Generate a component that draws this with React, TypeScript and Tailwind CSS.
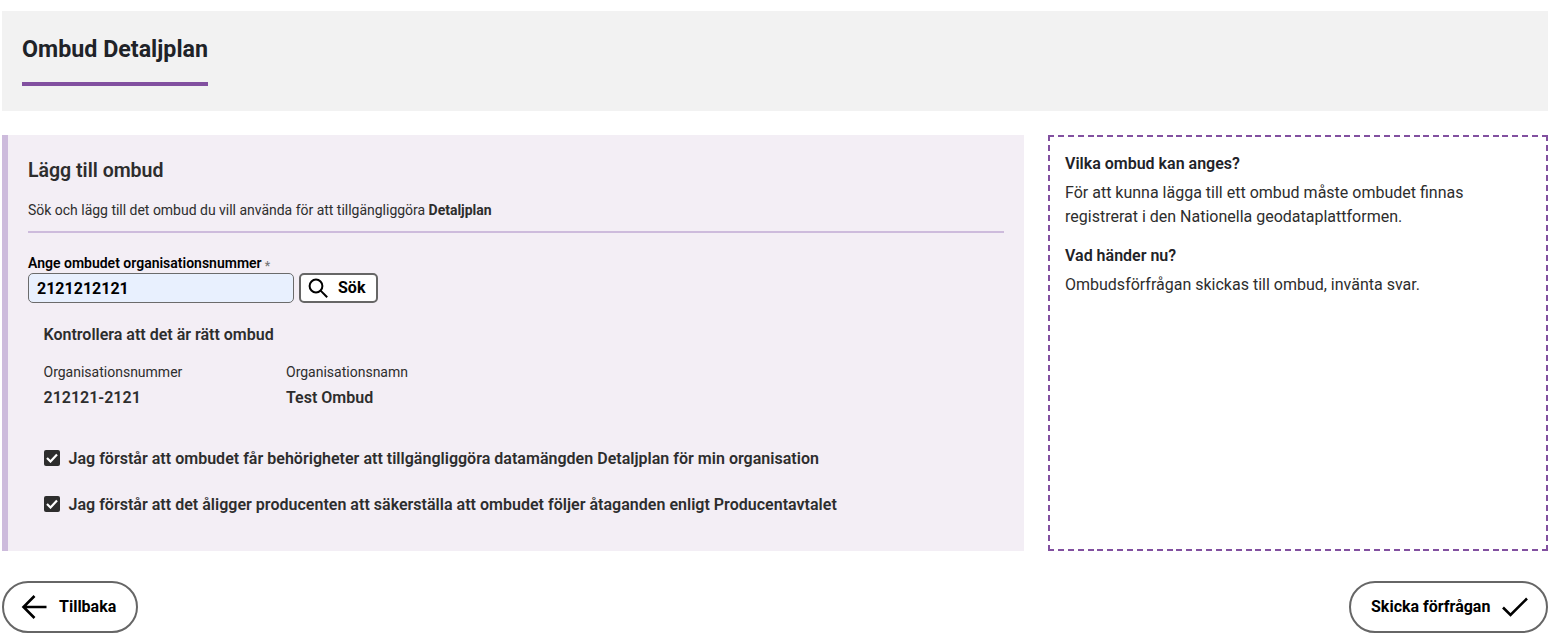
function CheckMark({ className }: { className?: string }) {
  return (
    <svg viewBox="0 0 26 20" width="26" height="20" fill="none" stroke="currentColor" strokeWidth="2.6" className={className}>
      <path d="M1 10.5 L8.5 18 L25 1.5" />
    </svg>
  );
}

function Consent({ children }: { children: string }) {
  return (
    <label className="flex items-center h-[22px] text-[16px] font-semibold tracking-[0.02px] text-[#2d2d2d]">
      <span className="w-4 h-4 mr-[9px] rounded-[2px] bg-[#2d2d2d] flex items-center justify-center shrink-0">
        <svg viewBox="0 0 12 10" width="12" height="10" fill="none" stroke="white" strokeWidth="2.2">
          <path d="M1 5 L4.5 8.5 L11 1.5" />
        </svg>
      </span>
      <span className="pt-[2px]">{children}</span>
    </label>
  );
}

export default function App() {
  return (
    <div className="w-[1546px] ml-[2px] pt-[11px] font-['Roboto',sans-serif] text-[#2d2d2d]">
      <header className="h-[100px] bg-[#f2f2f2] px-5 pt-[22px]">
        <div className="inline-block">
          <h1 className="text-[23.25px] leading-[32px] font-bold text-[#1f2328] pb-[17px] border-b-4 border-[#8250a0]">
            Ombud Detaljplan
          </h1>
        </div>
      </header>

      <main className="flex gap-6 mt-6 h-[416px]">
        <section className="w-[1022px] bg-[#f3eef5] border-l-[6px] border-[#cdbbdc] pl-5 pr-5 pt-[21px]">
          <h2 className="text-[19.5px] leading-[30px] font-semibold">Lägg till ombud</h2>
          <p className="mt-[14px] text-[14px] leading-[20px] tracking-[-0.015px] pb-[11px] border-b-2 border-[#cdbbdc]">
            Sök och lägg till det ombud du vill använda för att tillgängliggöra <strong className="font-bold">Detaljplan</strong>
          </p>
          <div className="mt-5 h-5 text-[14px] leading-[20px] font-semibold text-black">
            Ange ombudet organisationsnummer<span className="ml-[3px] text-[12px] align-[-2px] text-[#777]">*</span>
          </div>
          <div className="flex gap-[5px]">
            <input
              readOnly
              value="2121212121"
              className="w-[266px] h-[30px] px-2 rounded-[5px] border border-[#6b6b6b] bg-[#e8f0fe] text-[16px] font-bold text-black outline-none"
            />
            <button className="w-[79px] h-[30px] rounded-[5px] border-2 border-[#666] bg-white flex items-center pl-[7px] text-[16px] font-bold text-black">
              <svg viewBox="0 0 20 20" width="20" height="20" fill="none" stroke="currentColor" strokeWidth="2" className="mr-[10px]">
                <circle cx="8" cy="8" r="6.4" />
                <path d="M12.6 12.6 L19.2 19.2" />
              </svg>
              Sök
            </button>
          </div>
          <div className="pl-[15.5px]">
            <h3 className="mt-[21px] text-[16px] leading-[22px] font-semibold">Kontrollera att det är rätt ombud</h3>
            <div className="flex mt-4">
              <div className="w-[242.5px]">
                <div className="text-[14px] leading-[20px]">Organisationsnummer</div>
                <div className="mt-[6px] text-[16px] leading-[20px] font-semibold">212121-2121</div>
              </div>
              <div>
                <div className="text-[14px] leading-[20px]">Organisationsnamn</div>
                <div className="mt-[6px] text-[16px] leading-[20px] font-semibold">Test Ombud</div>
              </div>
            </div>
            <div className="mt-[39px] flex flex-col gap-6">
              <Consent>Jag förstår att ombudet får behörigheter att tillgängliggöra datamängden Detaljplan för min organisation</Consent>
              <Consent>Jag förstår att det åligger producenten att säkerställa att ombudet följer åtaganden enligt Producentavtalet</Consent>
            </div>
          </div>
        </section>

        <aside className="w-[500px] pl-[17px] pr-[18px] pt-[17px] text-[16px] leading-[24px] text-[#2d2d2d] bg-no-repeat [background-image:repeating-linear-gradient(90deg,#8250a0_0_6px,transparent_6px_9.88px),repeating-linear-gradient(-90deg,#8250a0_0_6px,transparent_6px_9.88px),repeating-linear-gradient(180deg,#8250a0_0_6px,transparent_6px_10px),repeating-linear-gradient(0deg,#8250a0_0_6px,transparent_6px_10px)] [background-size:100%_2px,100%_2px,2px_100%,2px_100%] [background-position:0_0,0_100%,0_0,100%_0]">
          <h3 className="font-semibold text-[#1f2328]">Vilka ombud kan anges?</h3>
          <p className="mt-[5px]">
            För att kunna lägga till ett ombud måste ombudet finnas registrerat i den Nationella geodataplattformen.
          </p>
          <h3 className="mt-[15px] font-semibold text-[#1f2328]">Vad händer nu?</h3>
          <p className="mt-[5px]">Ombudsförfrågan skickas till ombud, invänta svar.</p>
        </aside>
      </main>

      <footer className="flex justify-between mt-[30px]">
        <button className="h-[52px] w-[136px] rounded-[26px] border-2 border-[#666] bg-white flex items-center pl-[17px] text-[16px] font-bold text-black">
          <svg viewBox="0 0 26 26" width="26" height="26" fill="none" stroke="currentColor" strokeWidth="2.6" className="mr-[12px]">
            <path d="M13.5 2 L2.5 13 L13.5 24 M2.5 13 H25.5" />
          </svg>
          Tillbaka
        </button>
        <button className="h-[52px] w-[199px] rounded-[26px] border-2 border-[#666] bg-white flex items-center pl-5 text-[16px] font-bold text-black">
          Skicka förfrågan
          <CheckMark className="ml-3" />
        </button>
      </footer>
    </div>
  );
}
